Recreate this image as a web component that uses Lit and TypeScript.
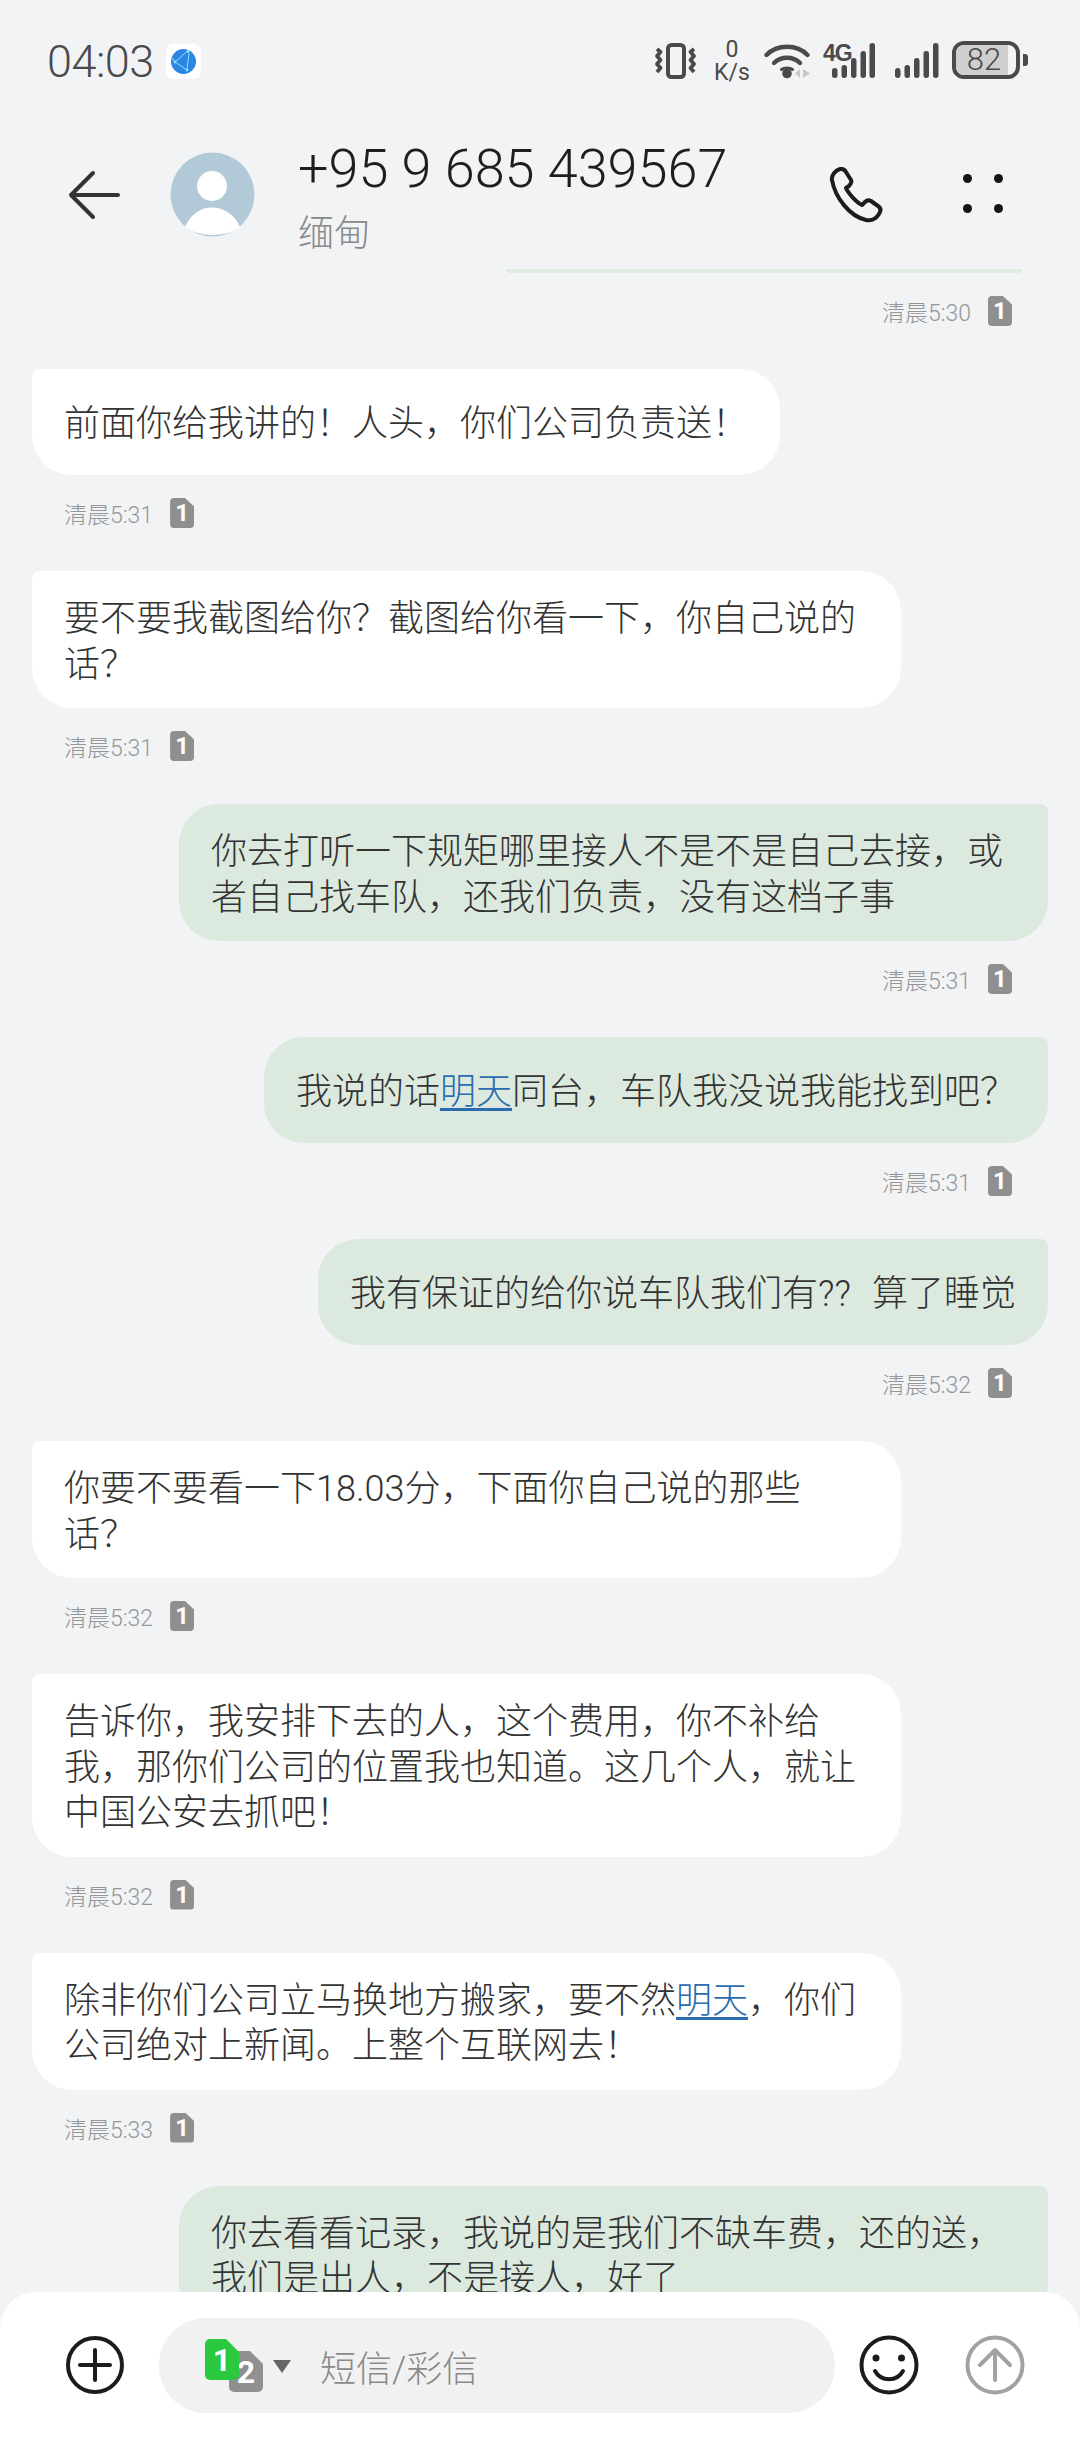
import { LitElement, css, html, svg } from 'lit'
import { customElement } from 'lit/decorators.js'

type Msg = { out?: boolean; parts: string[]; time?: string }

// parts at odd indexes are the underlined date links
const messages: Msg[] = [
    { parts: ['前面你给我讲的！人头，你们公司负责送！'], time: '清晨5:31' },
    { parts: ['要不要我截图给你？截图给你看一下，你自己说的话？'], time: '清晨5:31' },
    { out: true, parts: ['你去打听一下规矩哪里接人不是不是自己去接，或者自己找车队，还我们负责，没有这档子事'], time: '清晨5:31' },
    { out: true, parts: ['我说的话', '明天', '同台，车队我没说我能找到吧？'], time: '清晨5:31' },
    { out: true, parts: ['我有保证的给你说车队我们有??\u00a0\u00a0\u200a算了睡觉'], time: '清晨5:32' },
    { parts: ['你要不要看一下18.03分，下面你自己说的那些话？'], time: '清晨5:32' },
    { parts: ['告诉你，我安排下去的人，这个费用，你不补给我，那你们公司的位置我也知道。这几个人，就让中国公安去抓吧！'], time: '清晨5:32' },
    { parts: ['除非你们公司立马换地方搬家，要不然', '明天', '，你们公司绝对上新闻。上整个互联网去！'], time: '清晨5:33' },
    { out: true, parts: ['你去看看记录，我说的是我们不缺车费，还的送，我们是出人，不是接人，好了'] },
]

const barTops = [25, 22, 15, 8, 0]

const signalBars = (x: number[]) => barTops.map((top, i) =>
    svg`<rect x=${x[i]} y=${top} width="5.5" height=${35 - top} rx="2.7" fill="#4a4a4a"></rect>`)

@customElement('app-root')
export class AppRoot extends LitElement {

    render() {
        return html`
            <div class="screen" lang="zh-CN">
                ${this.renderStatus()}
                ${this.renderHeader()}
                <div class="list">
                    <div class="sliver"></div>
                    <div class="meta out">${this.renderMeta('清晨5:30')}</div>
                    ${messages.map(m => html`
                        <div class="row ${m.out ? 'out' : ''}">
                            <div class="bubble"><span>${m.parts.map((p, i) => i % 2 ? html`<span class="link">${p}</span>` : p)}</span></div>
                        </div>
                        ${m.time ? html`<div class="meta ${m.out ? 'out' : ''}">${this.renderMeta(m.time)}</div>` : ''}
                    `)}
                </div>
                ${this.renderComposer()}
            </div>
        `
    }

    private renderMeta(time: string) {
        return html`
            <span class="time">${time}</span>
            <span class="sim">1</span>
        `
    }

    private renderStatus() {
        return html`
            <div class="status">
                <span class="clock">04:03</span>
                <span class="app-icon">
                    <svg width="25" height="25" viewBox="0 0 25 25">
                        <circle cx="12.5" cy="12.5" r="12.5" fill="#2b86e4"></circle>
                        <path d="M17 1.5 L4 13 L16 21 L18 4 Z M4 13 L1 9" fill="none" stroke="#8fe0f2" stroke-width="1"></path>
                        <circle cx="17" cy="2.5" r="1.4" fill="#8fe0f2"></circle>
                        <circle cx="4" cy="13" r="1.4" fill="#8fe0f2"></circle>
                        <circle cx="16" cy="21" r="1.4" fill="#8fe0f2"></circle>
                    </svg>
                </span>
                <div class="status-right">
                    <svg class="s-vib" width="43" height="36" viewBox="0 0 43 36" fill="none" stroke="#4a4a4a" stroke-linejoin="round">
                        <rect x="14" y="2" width="16" height="32" rx="3.5" stroke-width="4"></rect>
                        <path d="M3 6 L6.500 9 L3 13 L6.500 17 L3 21 L6.500 25 L3 29" stroke-width="3.8"></path>
                        <path d="M40 6 L36.500 9 L40 13 L36.500 17 L40 21 L36.500 25 L40 29" stroke-width="3.8"></path>
                    </svg>
                    <span class="s-speed"><b>0</b><b>K/s</b></span>
                    <svg class="s-wifi" width="46" height="36" viewBox="0 0 46 36" fill="none" stroke="#4a4a4a" stroke-width="4.4" stroke-linecap="round">
                        <path d="M2.500 12 C13 1 33 1 43.500 12"></path>
                        <path d="M10 20 C17 13 29 13 36 20"></path>
                        <path d="M17.500 26.500 C20 24.500 26 24.500 28.500 26.500" stroke-width="3"></path>
                        <circle cx="23" cy="30.500" r="4.800" fill="#4a4a4a" stroke="none"></circle>
                        <path d="M36 26 L31 30.500 L36 35 Z M39 26 L39 35 L46 30.500 Z" fill="#c8c8c8" stroke="none"></path>
                    </svg>
                    <div class="s-4g">
                        <span>4G</span>
                        <svg width="52" height="36" viewBox="0 0 52 36">${signalBars([9, 18.5, 28, 37.5, 46.5])}</svg>
                    </div>
                    <svg class="s-signal" width="44" height="36" viewBox="0 0 44 36">${signalBars([0, 9.5, 19, 28.5, 38])}</svg>
                    <div class="battery">
                        <div class="battery-body"><div class="battery-fill"></div><span>82</span></div>
                        <div class="battery-nub"></div>
                    </div>
                </div>
            </div>
        `
    }

    private renderHeader() {
        return html`
            <div class="header">
                <svg class="back" width="52" height="50" viewBox="0 0 52 50" fill="none" stroke="#333" stroke-width="4" stroke-linecap="round" stroke-linejoin="round">
                    <path d="M50 25 H3 M25 3 L3 25 L25 47"></path>
                </svg>
                <svg class="avatar" width="85" height="85" viewBox="0 0 85 85">
                    <circle cx="42.5" cy="42.5" r="42" fill="#b2c9d8"></circle>
                    <circle cx="42" cy="34" r="15" fill="#fff"></circle>
                    <path d="M15 75 C21 61 32 55.5 42 55.5 C52 55.5 64 61 70 75 C56 85.5 29 85.5 15 75 Z" fill="#fff"></path>
                </svg>
                <div class="title">
                    <div class="number">+95 9 685 439567</div>
                    <div class="region">缅甸</div>
                </div>
                <svg class="call" width="54" height="56" viewBox="0 0 54 56" fill="none" stroke="#1c1c1c" stroke-width="4" stroke-linejoin="round">
                    <path d="M3 13 C2 8 7 3 11 2 C14 1.500 16 3 17 5 L22 13 C23 15 22 17 20 19 L17 21 C19 26 28 36 33 38 L36 35 C38 33 40 33 42 34 L49 39 C52 41 52 44 50 47 C47 52 42 54 37 53 C20 49 6 30 3 13 Z"></path>
                </svg>
                <div class="dots"><i></i><i></i><i></i><i></i></div>
            </div>
        `
    }

    private renderComposer() {
        return html`
            <div class="composer">
                <svg class="tool" width="60" height="60" viewBox="0 0 60 60" fill="none" stroke="#1c1c1c" stroke-width="4" stroke-linecap="round">
                    <circle cx="30" cy="30" r="27"></circle>
                    <path d="M15 30 H45 M30 15 V45"></path>
                </svg>
                <div class="input">
                    <div class="sim-pick">
                        <span class="pick two">2</span>
                        <span class="pick one">1</span>
                    </div>
                    <svg class="caret" width="18" height="13" viewBox="0 0 18 13"><path d="M0 0 H18 L9 13 Z" fill="#666"></path></svg>
                    <span class="placeholder">短信/彩信</span>
                </div>
                <svg class="tool smile" width="60" height="60" viewBox="0 0 60 60" fill="none" stroke="#1c1c1c" stroke-width="4" stroke-linecap="round">
                    <circle cx="30" cy="30" r="27.500"></circle>
                    <circle cx="17" cy="23" r="3.500" fill="#1c1c1c" stroke="none"></circle>
                    <circle cx="42.500" cy="23" r="3.500" fill="#1c1c1c" stroke="none"></circle>
                    <path d="M16 36 C22 47 38 47 44 36"></path>
                </svg>
                <svg class="tool send" width="60" height="60" viewBox="0 0 60 60" fill="none" stroke="#a2a2a2" stroke-width="4" stroke-linecap="round" stroke-linejoin="round">
                    <circle cx="30" cy="30" r="27.500"></circle>
                    <path d="M30 45 V16 M15 30 L30 15 L45 30"></path>
                </svg>
            </div>
        `
    }

    static styles = css`
        :host {
            display: block;
            width: 1080px;
            height: 2440px;
        }

        .screen {
            width: 1080px;
            height: 2440px;
            display: flex;
            flex-direction: column;
            overflow: hidden;
            background: #f1f3f5;
            font-family: Roboto, "Noto Sans CJK SC", sans-serif;
            font-weight: 300;
            text-spacing-trim: space-all;
        }

        .status {
            flex: none;
            height: 120px;
            box-sizing: border-box;
            padding: 41px 52px 0 47px;
            display: flex;
            align-items: flex-start;
        }

        .clock {
            font-size: 45px;
            line-height: 42px;
            color: #4a4a4a;
            width: 105px;
            letter-spacing: -0.5px;
        }

        .app-icon {
            width: 35px;
            height: 35px;
            margin: 3px 0 0 14px;
            background: #fff;
            border-radius: 7px;
            display: flex;
            align-items: center;
            justify-content: center;
        }

        .status-right {
            margin-left: auto;
            display: flex;
            align-items: flex-start;
        }

        .s-vib {
            margin-top: 2px;
        }

        .s-speed {
            margin: -3px 15px 0 18px;
            width: 34px;
            display: flex;
            flex-direction: column;
            align-items: center;
            color: #4a4a4a;
            font-size: 23px;
            line-height: 23px;
        }

        .s-speed b {
            font-weight: 400;
        }

        .s-wifi {
            margin-top: 2px;
            margin-right: 13px;
        }

        .s-4g {
            width: 52px;
            height: 38px;
            position: relative;
            margin-right: 20px;
            margin-top: 2px;
        }

        .s-4g span {
            position: absolute;
            left: 0;
            top: 1px;
            font-size: 23px;
            line-height: 18px;
            font-weight: 700;
            color: #4a4a4a;
            letter-spacing: -1px;
            font-family: "Liberation Sans", sans-serif;
        }

        .s-signal {
            margin-top: 2px;
            margin-right: 13px;
        }

        .battery {
            display: flex;
            align-items: center;
            gap: 3px;
        }

        .battery-body {
            width: 68px;
            height: 38px;
            box-sizing: border-box;
            border: 4px solid #4a4a4a;
            border-radius: 12px;
            position: relative;
            display: flex;
            align-items: center;
            justify-content: center;
            overflow: hidden;
        }

        .battery-fill {
            position: absolute;
            left: 0;
            top: 0;
            bottom: 0;
            width: 87%;
            background: #cfcfcf;
        }

        .battery-body span {
            position: relative;
            font-size: 31px;
            color: #4a4a4a;
            line-height: 30px;
            margin-right: 4px;
        }

        .battery-nub {
            width: 5px;
            height: 12px;
            border-radius: 0 3px 3px 0;
            background: #4a4a4a;
        }

        .header {
            flex: none;
            height: 149px;
            position: relative;
            display: flex;
            align-items: flex-start;
            box-sizing: border-box;
            padding-left: 68px;
        }

        .back {
            margin-top: 50px;
        }

        .avatar {
            margin: 32px 0 0 50px;
        }

        .title {
            margin-left: 43px;
            width: 530px;
        }

        .number {
            font-size: 54px;
            line-height: 60px;
            margin-top: 19px;
            color: #1e1e1e;
        }

        .region {
            font-size: 36px;
            line-height: 44px;
            margin-top: 13px;
            color: #8a8a8a;
        }

        .call {
            position: absolute;
            left: 829px;
            top: 47px;
        }

        .dots {
            position: absolute;
            left: 963px;
            top: 54px;
            display: grid;
            grid-template-columns: 9px 9px;
            gap: 21px 22px;
        }

        .dots i {
            width: 9px;
            height: 9px;
            border-radius: 50%;
            background: #141414;
        }

        .list {
            flex: 1;
            min-height: 0;
            overflow: hidden;
        }

        .sliver {
            height: 4px;
            margin: 0 58px 0 506px;
            background: #e0ece2;
            border-radius: 0 0 8px 8px;
        }

        .row {
            display: flex;
            padding: 0 32px;
        }

        .row.out {
            justify-content: flex-end;
        }

        .bubble {
            max-width: 869px;
            min-height: 106px;
            box-sizing: border-box;
            padding: 26px 32px 20px;
            background: #fff;
            border-radius: 8px 40px 40px 40px;
            font-size: 36px;
            line-height: 45.5px;
            color: #333;
            display: flex;
            align-items: center;
        }

        .row.out .bubble {
            background: #dce9de;
            border-radius: 40px 8px 40px 40px;
        }

        .link {
            color: #2b6cb0;
            text-decoration: underline;
            text-underline-offset: 4px;
        }

        .meta {
            height: 30px;
            margin: 23px 0 43px;
            padding: 0 68px 0 64px;
            display: flex;
            align-items: center;
            gap: 17px;
        }

        .meta.out {
            justify-content: flex-end;
        }

        .time {
            font-size: 23px;
            color: #969696;
        }

        .sim {
            width: 24px;
            height: 30px;
            background: #8f8f8f;
            color: #fff;
            font-size: 24px;
            font-weight: 700;
            display: flex;
            align-items: center;
            justify-content: center;
            border-radius: 4px;
            clip-path: polygon(0 0, 62% 0, 100% 28%, 100% 100%, 0 100%);
        }

        .composer {
            flex: none;
            height: 148px;
            box-sizing: border-box;
            background: #fff;
            border-radius: 36px 36px 0 0;
            position: relative;
            display: flex;
            align-items: flex-start;
            padding: 26px 0 0 65px;
        }

        .tool {
            margin-top: 17px;
        }

        .input {
            width: 676px;
            height: 95px;
            margin-left: 34px;
            background: #f1f1f1;
            border-radius: 47px;
            position: relative;
            display: flex;
            align-items: center;
            box-sizing: border-box;
            padding-left: 46px;
        }

        .sim-pick {
            width: 58px;
            height: 53px;
            position: relative;
        }

        .pick {
            position: absolute;
            width: 34px;
            height: 41px;
            border-radius: 5px;
            color: #fff;
            font-size: 32px;
            font-weight: 700;
            display: flex;
            align-items: center;
            justify-content: center;
            clip-path: polygon(0 0, 62% 0, 100% 32%, 100% 100%, 0 100%);
        }

        .pick.one {
            left: 0;
            top: 0;
            background: #2ac940;
        }

        .pick.two {
            left: 24px;
            top: 12px;
            background: #909090;
        }

        .caret {
            margin: 2px 0 0 10px;
        }

        .placeholder {
            margin-left: 29px;
            font-size: 36px;
            color: #8a8a8a;
        }

        .smile {
            margin-left: 24px;
        }

        .send {
            margin-left: 46px;
        }
    `
}

declare global {
    interface HTMLElementTagNameMap {
        'app-root': AppRoot
    }
}
